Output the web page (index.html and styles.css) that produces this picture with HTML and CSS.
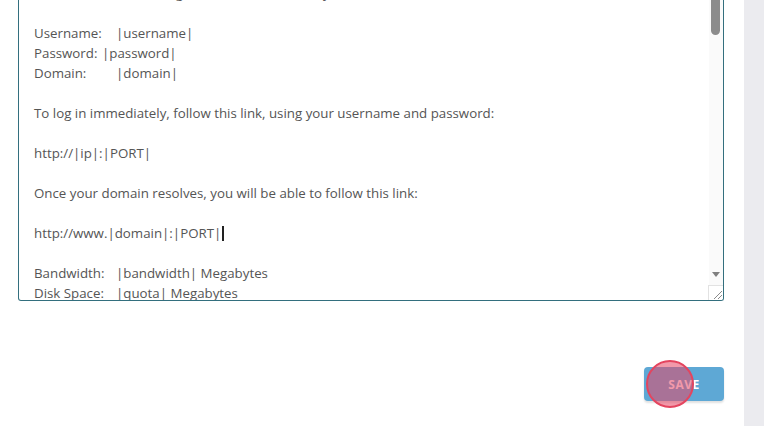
FILE: index.html
```html
<!DOCTYPE html>
<html>
<head>
<meta charset="utf-8">
<link rel="stylesheet" href="styles.css">
</head>
<body>
<div class="page">
  <main class="main">
    <div class="editor">
      <div class="text">
        <div class="line">Please use the following information to access your account:</div>
        <div class="line">&nbsp;</div>
        <div class="line"><span class="lab lab-u">Username:</span>|username|</div>
        <div class="line"><span class="lab lab-p">Password:</span>|password|</div>
        <div class="line"><span class="lab lab-u">Domain:</span>|domain|</div>
        <div class="line">&nbsp;</div>
        <div class="line">To log in immediately, follow this link, using your username and password:</div>
        <div class="line">&nbsp;</div>
        <div class="line">http://|ip|:|PORT|</div>
        <div class="line">&nbsp;</div>
        <div class="line">Once your domain resolves, you will be able to follow this link:</div>
        <div class="line">&nbsp;</div>
        <div class="line">http://www.|domain|:|PORT|<span class="caret"></span></div>
        <div class="line">&nbsp;</div>
        <div class="line"><span class="lab lab-b">Bandwidth:</span>|bandwidth| Megabytes</div>
        <div class="line"><span class="lab lab-b">Disk Space:</span>|quota| Megabytes</div>
      </div>
      <div class="scroll">
        <div class="thumb"></div>
        <div class="arrow"></div>
      </div>
      <div class="grip">
        <svg width="14" height="14" viewBox="0 0 14 14"><path d="M5 13 L13 5 M9 13 L13 9" stroke="#8a8a8a" stroke-width="1"/></svg>
      </div>
    </div>
    <div class="actions">
      <button class="save">SAVE</button>
      <span class="click"></span>
    </div>
  </main>
  <aside class="side"></aside>
</div>
</body>
</html>
```
FILE: styles.css
```css
html, body {
  margin: 0;
  padding: 0;
  background: #ffffff;
  overflow: hidden;
}
.page {
  display: flex;
  width: 764px;
  height: 426px;
}
.main {
  width: 744px;
  padding: 0 20px 0 18px;
  box-sizing: border-box;
  display: flex;
  flex-direction: column;
}
.side {
  width: 20px;
  background: #ebebef;
}
.editor {
  position: relative;
  margin-top: -28px;
  height: 329px;
  border: 1px solid #336f7e;
  border-top: none;
  border-radius: 0 0 3px 3px;
  overflow: hidden;
  box-sizing: border-box;
  flex-shrink: 0;
}
.text {
  padding: 11px 0 0 15px;
  font-family: "Open Sans", sans-serif;
  font-size: 13.3px;
  color: #555555;
}
.line {
  height: 20px;
  line-height: 20px;
  white-space: nowrap;
}
.lab { display: inline-block; }
.lab-u { width: 82px; }
.lab-p { width: 68px; }
.lab-b { width: 82px; }
.caret {
  display: inline-block;
  width: 2px;
  height: 15px;
  background: #222;
  vertical-align: -3px;
  margin-left: 1px;
}
.scroll {
  position: absolute;
  top: 0;
  right: 0;
  width: 14px;
  height: 314px;
  background: #fafafa;
}
.thumb {
  position: absolute;
  left: 2px;
  top: 0;
  width: 9px;
  height: 63px;
  border-radius: 0 0 5px 5px;
  background: #8c8c8c;
}
.arrow {
  position: absolute;
  left: 3px;
  bottom: 9px;
  width: 0;
  height: 0;
  border-left: 4px solid transparent;
  border-right: 4px solid transparent;
  border-top: 5px solid #7f7f7f;
}
.grip {
  position: absolute;
  right: 0;
  bottom: 0;
  width: 14px;
  height: 14px;
  background: #fff;
  border-left: 1px solid #e2e2e2;
  border-top: 1px solid #e2e2e2;
}
.grip svg { display: block; }
.actions {
  position: relative;
  display: flex;
  justify-content: flex-end;
  margin-top: 66px;
}
.save {
  width: 80px;
  height: 34px;
  border: none;
  border-radius: 4px;
  background: #5ea8d5;
  box-shadow: 0 2px 2px rgba(0,0,0,0.12);
  color: #ffffff;
  font-family: "Open Sans", sans-serif;
  font-weight: 700;
  font-size: 12px;
  letter-spacing: 0.5px;
  padding: 0;
}
.click {
  position: absolute;
  right: 30px;
  top: -7px;
  width: 48px;
  height: 48px;
  border-radius: 50%;
  border: 2px solid #e4455f;
  background: rgba(232, 70, 100, 0.55);
  box-sizing: border-box;
}
```
